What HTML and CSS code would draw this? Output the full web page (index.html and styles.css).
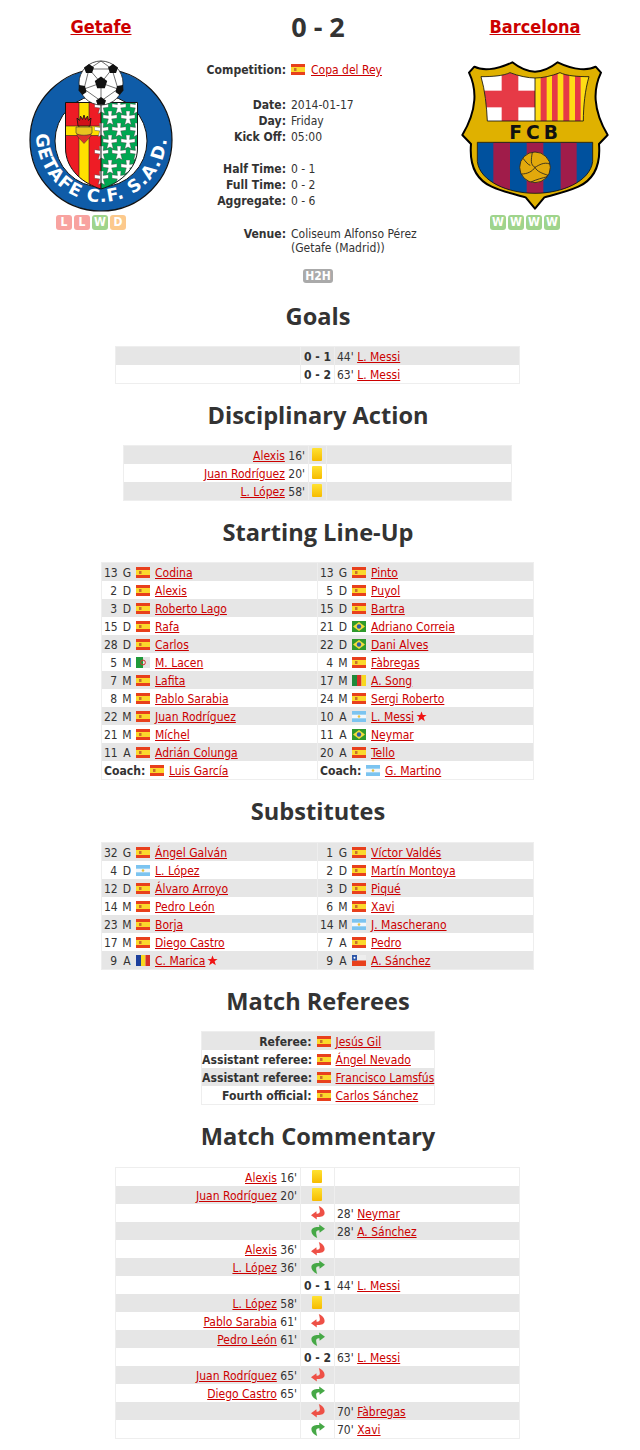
FILE: index.html
```html
<!DOCTYPE html>
<html lang="en">
<head>
<meta charset="utf-8">
<title>Getafe 0 - 2 Barcelona</title>
<link rel="stylesheet" href="styles.css">
</head>
<body>
<svg class="defs" xmlns="http://www.w3.org/2000/svg">
  <symbol id="es" viewBox="0 0 14 11"><rect width="14" height="11" fill="#e8401c"/><rect y="3" width="14" height="5" fill="#fbd92c"/><rect x="3" y="4" width="2.5" height="3" fill="#c8702a"/></symbol>
  <symbol id="ar" viewBox="0 0 14 11"><rect width="14" height="11" fill="#7cc4f0"/><rect y="3.7" width="14" height="3.6" fill="#f4f8fb"/><circle cx="7" cy="5.5" r="1.3" fill="#e8c040"/></symbol>
  <symbol id="br" viewBox="0 0 14 11"><rect width="14" height="11" fill="#2f9a2c"/><path d="M7 1 13 5.5 7 10 1 5.5Z" fill="#f4dc3a"/><circle cx="7" cy="5.5" r="2.2" fill="#2b5fa8"/></symbol>
  <symbol id="dz" viewBox="0 0 14 11"><rect width="7" height="11" fill="#1f9a3a"/><rect x="7" width="7" height="11" fill="#e4e4e4"/><circle cx="7" cy="5.5" r="2.4" fill="none" stroke="#d83030" stroke-width="1"/></symbol>
  <symbol id="cm" viewBox="0 0 14 11"><rect width="5" height="11" fill="#1f8a3a"/><rect x="5" width="4.5" height="11" fill="#d83028"/><rect x="9.5" width="4.5" height="11" fill="#f8d820"/></symbol>
  <symbol id="ro" viewBox="0 0 14 11"><rect width="5" height="11" fill="#1c3f9c"/><rect x="5" width="4.5" height="11" fill="#f8d820"/><rect x="9.5" width="4.5" height="11" fill="#d83028"/></symbol>
  <symbol id="cl" viewBox="0 0 14 11"><rect width="14" height="5.5" fill="#eeeeee"/><rect y="5.5" width="14" height="5.5" fill="#e8401c"/><rect width="5" height="5.5" fill="#2b55a8"/><circle cx="2.5" cy="2.7" r="1" fill="#fff"/></symbol>
  <symbol id="off" viewBox="0 0 14 14"><path d="M0 9.3 5.4 5.2 5.6 7.7C7.6 7.9 9.2 7 8.8 4.6 8.6 2.9 8.2 1.2 7.8 0 10.2 1 13.6 3.6 13.6 7 13.6 10.4 9.6 11.3 5.7 11L5.8 13.6Z" fill="#ee5046"/></symbol>
  <symbol id="on" viewBox="0 0 14 14"><path d="M14 4.7 8.6 8.8 8.4 6.3C6.4 6.1 4.8 7 5.2 9.4 5.4 11.1 5.8 12.8 6.2 14 3.8 13 .4 10.4.4 7 .4 3.6 4.4 2.7 8.3 3L8.2.4Z" fill="#46a846"/></symbol>
  <symbol id="star" viewBox="0 0 14 14"><path d="M7 .6 8.700 5H13.500L9.700 8 11.200 13 7 10.100 2.800 13 4.300 8 .5 5H5.300Z" fill="#f01414"/></symbol>
  <symbol id="erm" viewBox="0 0 16 16"><path d="M5.600 0H10.400L9.800 5 16 4.200V8.400L10 9 11.800 15.800 8 13.800 4.200 15.800 6 9 0 8.400V4.200L6.200 5Z" fill="#fff" stroke="#444" stroke-width=".5"/></symbol>
</svg>

<div class="page">
  <header class="match">
    <div class="team">
      <h2 class="team-name"><a href="#">Getafe</a></h2>
      <svg class="crest" viewBox="28 60 146 152" xmlns="http://www.w3.org/2000/svg" role="img" aria-label="Getafe crest">
        <defs>
          <clipPath id="gshield"><path d="M65.500 102.500H137.500V148C137.500 170 118 184 101 189 84 184 65.500 170 65.500 148Z"/></clipPath>
        </defs>
        <circle cx="101" cy="140" r="71" fill="#0f5ca8" stroke="#111" stroke-width="1.200"/>
        <circle cx="101" cy="141" r="46" fill="#fff" stroke="#111" stroke-width="1"/>
        <path id="gring" d="M36 134A65.500 68 0 0 0 167 134" fill="none"/>
        <text class="ring-text"><textPath href="#gring" textLength="204" lengthAdjust="spacing">GETAFE C.F. S.A.D.</textPath></text>
        <g clip-path="url(#gshield)">
          <rect x="65" y="102" width="36" height="88" fill="#ee1c25"/>
          <rect x="101" y="102" width="37" height="88" fill="#00a651"/>
          <rect x="79" y="102" width="10" height="88" fill="#ffe000"/>
          <rect x="65" y="126" width="36" height="9.500" fill="#ffe000"/>
          <path d="M79 102V190M89 102V190M65 126H79M89 126H101M65 135.500H79M89 135.500H101" stroke="#222" stroke-width=".6"/>
          <use href="#erm" x="112" y="100" width="14" height="14"/><use href="#erm" x="103" y="111" width="14" height="14"/><use href="#erm" x="121" y="111" width="14" height="14"/>
          <use href="#erm" x="112" y="123" width="14" height="14"/><use href="#erm" x="103" y="135" width="14" height="14"/><use href="#erm" x="121" y="135" width="14" height="14"/>
          <use href="#erm" x="112" y="146" width="14" height="14"/><use href="#erm" x="103" y="160" width="14" height="14"/><use href="#erm" x="121" y="160" width="14" height="14"/>
          <use href="#erm" x="112" y="171" width="14" height="14"/><use href="#erm" x="94.500" y="100" width="14" height="14"/><use href="#erm" x="130" y="100" width="14" height="14"/>
          <use href="#erm" x="94.500" y="123" width="14" height="14"/><use href="#erm" x="130" y="123" width="14" height="14"/><use href="#erm" x="94.500" y="146" width="14" height="14"/><use href="#erm" x="130" y="146" width="14" height="14"/><use href="#erm" x="94.500" y="171" width="14" height="14"/>
        </g>
        <path d="M78 126 77 118 79.500 120.500 80.500 116 82.500 119.500 84 115 85.500 119.500 87.500 116 88.500 120.500 91 118 90 126Z" fill="#d01018" stroke="#111" stroke-width=".8"/>
        <path d="M77 130H91V136L84 143.500 77 136Z" fill="#e0302a" stroke="#333" stroke-width=".5"/>
        <path d="M76 127H92V133C90 136 78 136 76 133Z" fill="#e8c420" stroke="#333" stroke-width=".6"/>
        <path d="M65.500 102.500H137.500V148C137.500 170 118 184 101 189 84 184 65.500 170 65.500 148ZM101 102.500V189" fill="none" stroke="#111" stroke-width="1"/>
        <circle cx="101" cy="83" r="22" fill="#fff" stroke="#222" stroke-width=".8"/>
        <path d="M101 83 89 69M101 83 112 69M101 83 84 89M101 83 118 89M101 83 101 101M89 69 112 69M84 89 89 69M118 89 112 69M84 89 101 101M118 89 101 101M89 69 101 61M112 69 101 61" stroke="#333" stroke-width=".7" fill="none"/>
        <path d="M101 76.500 107.200 81 104.800 88.200H97.200L94.800 81ZM89 64 94 67.500 92 73H86L84 67.500ZM113 64 118 67.500 116 73H110L108 67.500ZM79 85 85 86 86.500 92 82.500 95 78.500 90.500ZM123 85 123.500 90.500 119.500 95 115.500 92 117 86ZM101 97 106 100.500 104.500 104.800H97.500L96 100.500Z" fill="#111"/>
      </svg>
      <div class="form form-left"><span class="f l">L</span><span class="f l">L</span><span class="f w">W</span><span class="f d">D</span></div>
    </div>

    <div class="centre">
      <h1 class="score">0 - 2</h1>
      <dl class="info comp">
        <dt>Competition:</dt><dd><svg class="flag flag-comp"><use href="#es"/></svg><a href="#">Copa del Rey</a></dd>
      </dl>
      <dl class="info when">
        <dt>Date:</dt><dd>2014-01-17</dd>
        <dt>Day:</dt><dd>Friday</dd>
        <dt>Kick Off:</dt><dd>05:00</dd>
      </dl>
      <dl class="info when">
        <dt>Half Time:</dt><dd>0 - 1</dd>
        <dt>Full Time:</dt><dd>0 - 2</dd>
        <dt>Aggregate:</dt><dd>0 - 6</dd>
      </dl>
      <dl class="info where">
        <dt>Venue:</dt><dd>Coliseum Alfonso Pérez<br>(Getafe (Madrid))</dd>
      </dl>
      <div class="h2h-wrap"><span class="h2h">H2H</span></div>
    </div>

    <div class="team">
      <h2 class="team-name"><a href="#">Barcelona</a></h2>
      <svg class="crest crest-fcb" viewBox="21 30 438 456" xmlns="http://www.w3.org/2000/svg" role="img" aria-label="Barcelona crest">
        <defs>
          <clipPath id="bbottom"><path d="M67 277H413V335C405 395 320 430 240 430 160 430 75 395 67 335Z"/></clipPath>
          <clipPath id="btop"><path d="M78 80C110 80 145 78 165 68 190 78 220 84 240 84 262 84 290 78 315 68 335 78 370 80 402 80 390 120 385 170 385 213H97C95 170 90 120 78 80Z"/></clipPath>
        </defs>
        <path d="M42 68 58 50C80 62 120 62 172 37 195 55 220 65 240 65 260 65 285 55 308 37 360 62 400 62 422 50 L438 68C425 95 420 120 422 150 425 190 440 225 458 255L432 282C436 330 425 385 370 410 330 428 290 435 268 442L240 476 212 442C190 435 150 428 110 410 55 385 44 330 48 282L22 255C40 225 55 190 58 150 60 120 55 95 42 68Z" fill="#dfb100" stroke="#000" stroke-width="6" stroke-linejoin="round"/>
        <g clip-path="url(#btop)">
          <rect x="70" y="60" width="170" height="155" fill="#fff"/>
          <rect x="140" y="60" width="50" height="155" fill="#e63a46"/>
          <rect x="70" y="122" width="170" height="50" fill="#e63a46"/>
          <rect x="240" y="60" width="170" height="155" fill="#ffdd15"/>
          <path d="M257 60H275V215H257ZM291 60H308V215H291ZM325 60H343V215H325ZM360 60H377V215H360Z" fill="#e63a46"/>
        </g>
        <path d="M78 80C110 80 145 78 165 68 190 78 220 84 240 84 262 84 290 78 315 68 335 78 370 80 402 80 390 120 385 170 385 213H97C95 170 90 120 78 80ZM240 84V213" fill="none" stroke="#111" stroke-width="2.500"/>
        <text class="fcb" x="242" y="268" text-anchor="middle">FCB</text>
        <g clip-path="url(#bbottom)">
          <rect x="60" y="277" width="360" height="160" fill="#00519e"/>
          <path d="M115 277H165V440H115ZM215 277H265V440H215ZM317 277H365V440H317Z" fill="#a01c4a"/>
        </g>
        <path d="M67 277H413V335C405 395 320 430 240 430 160 430 75 395 67 335Z" fill="none" stroke="#111" stroke-width="2.500"/>
        <circle cx="240" cy="352" r="46" fill="#e2a90c" stroke="#222" stroke-width="2.500"/>
        <path d="M232 307C228 330 226 345 240 352 252 345 268 335 284 342M240 352C232 365 216 372 199 372M240 352C246 365 262 370 279 376M204 325C212 335 220 345 226 346M228 396C245 388 262 384 277 380" fill="none" stroke="#222" stroke-width="2.500"/>
      </svg>
      <div class="form form-right"><span class="f w">W</span><span class="f w">W</span><span class="f w">W</span><span class="f w">W</span></div>
    </div>
  </header>

  <h3 class="section">Goals</h3>
  <table class="ev ev-wide">
    <tr class="alt"><td class="home"></td><td class="mid"><b>0 - 1</b></td><td class="away">44' <a href="#">L. Messi</a></td></tr>
    <tr><td class="home"></td><td class="mid"><b>0 - 2</b></td><td class="away">63' <a href="#">L. Messi</a></td></tr>
  </table>

  <h3 class="section">Disciplinary Action</h3>
  <table class="ev ev-disc">
    <tr class="alt"><td class="home"><a href="#">Alexis</a> 16'</td><td class="mid"><i class="card"></i></td><td class="away"></td></tr>
    <tr><td class="home"><a href="#">Juan Rodríguez</a> 20'</td><td class="mid"><i class="card"></i></td><td class="away"></td></tr>
    <tr class="alt"><td class="home"><a href="#">L. López</a> 58'</td><td class="mid"><i class="card"></i></td><td class="away"></td></tr>
  </table>

  <h3 class="section">Starting Line-Up</h3>
  <table class="squad">
    <tr class="alt"><td><span class="no">13</span> <span class="pos">G</span><svg class="flag"><use href="#es"/></svg><a href="#">Codina</a></td><td><span class="no">13</span> <span class="pos">G</span><svg class="flag"><use href="#es"/></svg><a href="#">Pinto</a></td></tr>
    <tr><td><span class="no">2</span> <span class="pos">D</span><svg class="flag"><use href="#es"/></svg><a href="#">Alexis</a></td><td><span class="no">5</span> <span class="pos">D</span><svg class="flag"><use href="#es"/></svg><a href="#">Puyol</a></td></tr>
    <tr class="alt"><td><span class="no">3</span> <span class="pos">D</span><svg class="flag"><use href="#es"/></svg><a href="#">Roberto Lago</a></td><td><span class="no">15</span> <span class="pos">D</span><svg class="flag"><use href="#es"/></svg><a href="#">Bartra</a></td></tr>
    <tr><td><span class="no">15</span> <span class="pos">D</span><svg class="flag"><use href="#es"/></svg><a href="#">Rafa</a></td><td><span class="no">21</span> <span class="pos">D</span><svg class="flag"><use href="#br"/></svg><a href="#">Adriano Correia</a></td></tr>
    <tr class="alt"><td><span class="no">28</span> <span class="pos">D</span><svg class="flag"><use href="#es"/></svg><a href="#">Carlos</a></td><td><span class="no">22</span> <span class="pos">D</span><svg class="flag"><use href="#br"/></svg><a href="#">Dani Alves</a></td></tr>
    <tr><td><span class="no">5</span> <span class="pos">M</span><svg class="flag"><use href="#dz"/></svg><a href="#">M. Lacen</a></td><td><span class="no">4</span> <span class="pos">M</span><svg class="flag"><use href="#es"/></svg><a href="#">Fàbregas</a></td></tr>
    <tr class="alt"><td><span class="no">7</span> <span class="pos">M</span><svg class="flag"><use href="#es"/></svg><a href="#">Lafita</a></td><td><span class="no">17</span> <span class="pos">M</span><svg class="flag"><use href="#cm"/></svg><a href="#">A. Song</a></td></tr>
    <tr><td><span class="no">8</span> <span class="pos">M</span><svg class="flag"><use href="#es"/></svg><a href="#">Pablo Sarabia</a></td><td><span class="no">24</span> <span class="pos">M</span><svg class="flag"><use href="#es"/></svg><a href="#">Sergi Roberto</a></td></tr>
    <tr class="alt"><td><span class="no">22</span> <span class="pos">M</span><svg class="flag"><use href="#es"/></svg><a href="#">Juan Rodríguez</a></td><td><span class="no">10</span> <span class="pos">A</span><svg class="flag"><use href="#ar"/></svg><a href="#">L. Messi</a><svg class="star"><use href="#star"/></svg></td></tr>
    <tr><td><span class="no">21</span> <span class="pos">M</span><svg class="flag"><use href="#es"/></svg><a href="#">Míchel</a></td><td><span class="no">11</span> <span class="pos">A</span><svg class="flag"><use href="#br"/></svg><a href="#">Neymar</a></td></tr>
    <tr class="alt"><td><span class="no">11</span> <span class="pos">A</span><svg class="flag"><use href="#es"/></svg><a href="#">Adrián Colunga</a></td><td><span class="no">20</span> <span class="pos">A</span><svg class="flag"><use href="#es"/></svg><a href="#">Tello</a></td></tr>
    <tr><td><b class="coach">Coach:</b><svg class="flag"><use href="#es"/></svg><a href="#">Luis García</a></td><td><b class="coach">Coach:</b><svg class="flag"><use href="#ar"/></svg><a href="#">G. Martino</a></td></tr>
  </table>

  <h3 class="section section-long">Substitutes</h3>
  <table class="squad">
    <tr class="alt"><td><span class="no">32</span> <span class="pos">G</span><svg class="flag"><use href="#es"/></svg><a href="#">Ángel Galván</a></td><td><span class="no">1</span> <span class="pos">G</span><svg class="flag"><use href="#es"/></svg><a href="#">Víctor Valdés</a></td></tr>
    <tr><td><span class="no">4</span> <span class="pos">D</span><svg class="flag"><use href="#ar"/></svg><a href="#">L. López</a></td><td><span class="no">2</span> <span class="pos">D</span><svg class="flag"><use href="#es"/></svg><a href="#">Martín Montoya</a></td></tr>
    <tr class="alt"><td><span class="no">12</span> <span class="pos">D</span><svg class="flag"><use href="#es"/></svg><a href="#">Álvaro Arroyo</a></td><td><span class="no">3</span> <span class="pos">D</span><svg class="flag"><use href="#es"/></svg><a href="#">Piqué</a></td></tr>
    <tr><td><span class="no">14</span> <span class="pos">M</span><svg class="flag"><use href="#es"/></svg><a href="#">Pedro León</a></td><td><span class="no">6</span> <span class="pos">M</span><svg class="flag"><use href="#es"/></svg><a href="#">Xavi</a></td></tr>
    <tr class="alt"><td><span class="no">23</span> <span class="pos">M</span><svg class="flag"><use href="#es"/></svg><a href="#">Borja</a></td><td><span class="no">14</span> <span class="pos">M</span><svg class="flag"><use href="#ar"/></svg><a href="#">J. Mascherano</a></td></tr>
    <tr><td><span class="no">17</span> <span class="pos">M</span><svg class="flag"><use href="#es"/></svg><a href="#">Diego Castro</a></td><td><span class="no">7</span> <span class="pos">A</span><svg class="flag"><use href="#es"/></svg><a href="#">Pedro</a></td></tr>
    <tr class="alt"><td><span class="no">9</span> <span class="pos">A</span><svg class="flag"><use href="#ro"/></svg><a href="#">C. Marica</a><svg class="star"><use href="#star"/></svg></td><td><span class="no">9</span> <span class="pos">A</span><svg class="flag"><use href="#cl"/></svg><a href="#">A. Sánchez</a></td></tr>
  </table>

  <h3 class="section">Match Referees</h3>
  <table class="refs">
    <tr class="alt"><th>Referee:</th><td><svg class="flag"><use href="#es"/></svg><a href="#">Jesús Gil</a></td></tr>
    <tr><th>Assistant referee:</th><td><svg class="flag"><use href="#es"/></svg><a href="#">Ángel Nevado</a></td></tr>
    <tr class="alt"><th>Assistant referee:</th><td><svg class="flag"><use href="#es"/></svg><a href="#">Francisco Lamsfús</a></td></tr>
    <tr><th>Fourth official:</th><td><svg class="flag"><use href="#es"/></svg><a href="#">Carlos Sánchez</a></td></tr>
  </table>

  <h3 class="section section-long">Match Commentary</h3>
  <table class="ev ev-wide">
    <tr><td class="home"><a href="#">Alexis</a> 16'</td><td class="mid"><i class="card"></i></td><td class="away"></td></tr>
    <tr class="alt"><td class="home"><a href="#">Juan Rodríguez</a> 20'</td><td class="mid"><i class="card"></i></td><td class="away"></td></tr>
    <tr><td class="home"></td><td class="mid"><svg class="sub"><use href="#off"/></svg></td><td class="away">28' <a href="#">Neymar</a></td></tr>
    <tr class="alt"><td class="home"></td><td class="mid"><svg class="sub"><use href="#on"/></svg></td><td class="away">28' <a href="#">A. Sánchez</a></td></tr>
    <tr><td class="home"><a href="#">Alexis</a> 36'</td><td class="mid"><svg class="sub"><use href="#off"/></svg></td><td class="away"></td></tr>
    <tr class="alt"><td class="home"><a href="#">L. López</a> 36'</td><td class="mid"><svg class="sub"><use href="#on"/></svg></td><td class="away"></td></tr>
    <tr><td class="home"></td><td class="mid"><b>0 - 1</b></td><td class="away">44' <a href="#">L. Messi</a></td></tr>
    <tr class="alt"><td class="home"><a href="#">L. López</a> 58'</td><td class="mid"><i class="card"></i></td><td class="away"></td></tr>
    <tr><td class="home"><a href="#">Pablo Sarabia</a> 61'</td><td class="mid"><svg class="sub"><use href="#off"/></svg></td><td class="away"></td></tr>
    <tr class="alt"><td class="home"><a href="#">Pedro León</a> 61'</td><td class="mid"><svg class="sub"><use href="#on"/></svg></td><td class="away"></td></tr>
    <tr><td class="home"></td><td class="mid"><b>0 - 2</b></td><td class="away">63' <a href="#">L. Messi</a></td></tr>
    <tr class="alt"><td class="home"><a href="#">Juan Rodríguez</a> 65'</td><td class="mid"><svg class="sub"><use href="#off"/></svg></td><td class="away"></td></tr>
    <tr><td class="home"><a href="#">Diego Castro</a> 65'</td><td class="mid"><svg class="sub"><use href="#on"/></svg></td><td class="away"></td></tr>
    <tr class="alt"><td class="home"></td><td class="mid"><svg class="sub"><use href="#off"/></svg></td><td class="away">70' <a href="#">Fàbregas</a></td></tr>
    <tr><td class="home"></td><td class="mid"><svg class="sub"><use href="#on"/></svg></td><td class="away">70' <a href="#">Xavi</a></td></tr>
  </table>
</div>
</body>
</html>
```

FILE: styles.css
```css
* { box-sizing: border-box; }
html, body { margin: 0; padding: 0; background: #fff; }
body { font: 12px/18px "DejaVu Sans Condensed", "DejaVu Sans", sans-serif; color: #333; }
b, dt, th { font-size: 12.1px; }
.defs { display: none; }
a { color: #c00; text-decoration: underline; }
.page { width: 636px; }

.match { display: grid; grid-template-columns: 202px 232px 202px; height: 285px; }
.team { display: flex; flex-direction: column; align-items: center; padding-top: 16px; }
.team-name { margin: 0; font: bold 18px/22px "DejaVu Sans Condensed", "DejaVu Sans", sans-serif; }
.crest { width: 146px; height: 152px; margin-top: 22px; flex: none; overflow: visible; }
.ring-text { font: bold 17.5px "DejaVu Sans", sans-serif; fill: #fff; }
.fcb { font: bold 56px "DejaVu Sans", sans-serif; fill: #111; letter-spacing: 12px; }
.form { display: flex; gap: 2px; margin-top: 3px; }
.form-left { margin-right: 20px; }
.form-right { margin-right: 20px; }
.f { width: 16px; height: 15px; border-radius: 3px; color: #fff; font: bold 12px/15px "DejaVu Sans Condensed", "DejaVu Sans", sans-serif; text-align: center; }
.f.l { background: #f8a3a0; }
.f.w { background: #9fd48c; }
.f.d { background: #fcc98c; }

.centre { padding-top: 11px; }
.score { margin: 0; font: bold 27px/32px "Open Sans", sans-serif; text-align: center; color: #333; }
.info { display: grid; grid-template-columns: 84px 1fr; column-gap: 5px; margin: 0; line-height: 16px; }
.info dt { font-weight: bold; text-align: right; white-space: nowrap; }
.info dd { margin: 0; }
.comp { margin-top: 19px; }
.when { margin-top: 16px; }
.comp + .when { margin-top: 19px; }
.where { margin-top: 18px; line-height: 14px; }
.flag { width: 14px; height: 11px; vertical-align: -1px; }
.flag-comp { margin-right: 6px; }
.h2h-wrap { text-align: center; margin-top: 14px; line-height: 14px; }
.h2h { display: inline-block; background: #aaa; color: #fff; font-weight: bold; font-size: 12px; line-height: 14px; height: 14px; width: 30px; border-radius: 3px; }

.section { margin: 0; height: 61px; font: bold 23.6px/63px "Open Sans", sans-serif; text-align: center; color: #333; }
.section-long { height: 62px; line-height: 63px; }

table { border-collapse: collapse; table-layout: fixed; margin: 0; }
td, th { padding: 2px 0 0; height: 18px; line-height: 16px; white-space: nowrap; }
tr.alt { background: #e6e6e6; }

.ev { border: 1px solid #eee; }
.ev-wide { width: 404px; margin-left: 115px; }
.ev-disc { width: 388px; margin-left: 123px; }
.ev td { border-left: 1px solid #eee; border-right: 1px solid #eee; }
.home { text-align: right; padding-right: 3px; }
.mid { text-align: center; vertical-align: top; }
.away { padding-left: 2px; }
.ev-wide .home { width: 185px; }
.ev-wide .mid { width: 34px; }
.ev-wide .away { width: 185px; }
.ev-disc .home { width: 185px; }
.ev-disc .mid { width: 18px; }
.ev-disc .away { width: 185px; }
.card { display: block; width: 10px; height: 13px; margin: 0 auto; border-radius: 1px; background: linear-gradient(#ffe233, #f6bb00); position: relative; left: -1px; }
.sub { display: block; width: 14px; height: 14px; margin: 0 auto; }

.squad { width: 433px; margin-left: 101px; border: 1px solid #eee; }
.squad td { width: 50%; border-left: 1px solid #eee; padding-left: 2px; }
.no { display: inline-block; width: 13px; text-align: right; }
.pos { display: inline-block; width: 13px; text-align: center; }
.squad .flag { margin: 0 5px 0 2.6px; }
.coach { margin-right: 2px; }
.star { width: 11px; height: 11px; vertical-align: -1px; margin-left: 2px; }

.refs { width: 234px; margin-left: 201px; border: 1px solid #eee; }
.refs th { width: 113px; text-align: right; font-weight: bold; padding-right: 3px; }
.refs td { padding-left: 2px; }
.refs .flag { margin-right: 5px; }
```
